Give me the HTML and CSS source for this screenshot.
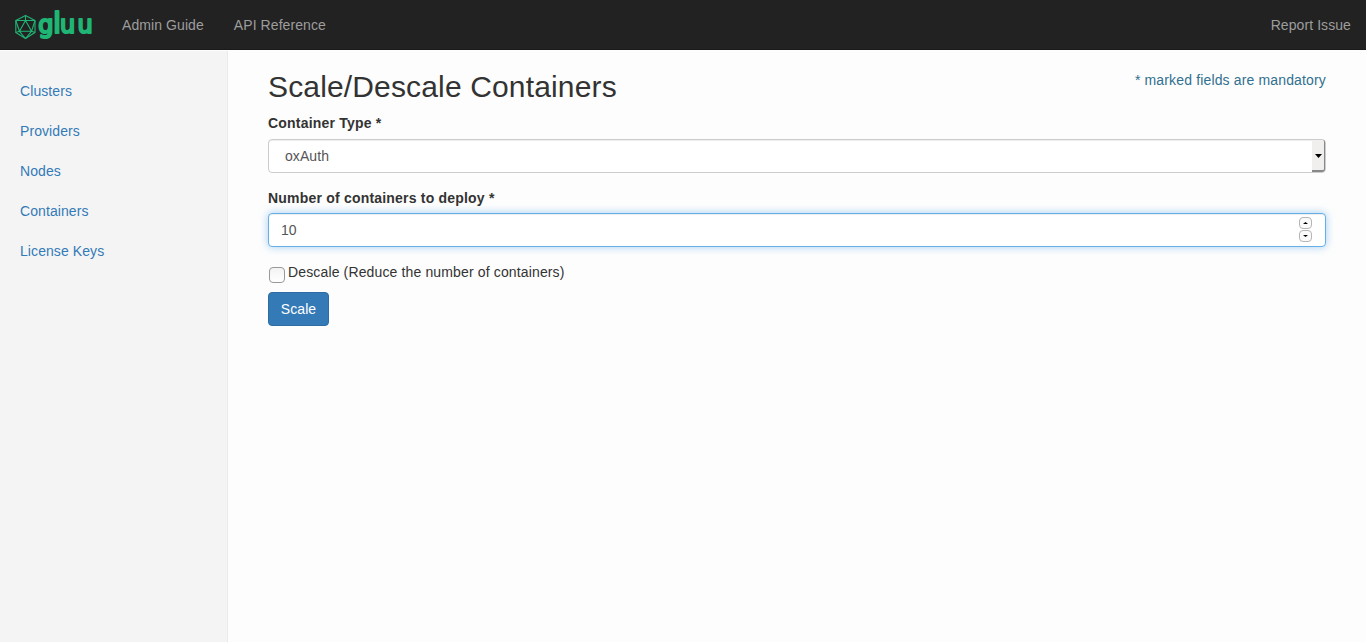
FILE: index.html
```html
<!DOCTYPE html>
<html lang="en">
<head>
<meta charset="utf-8">
<title>Gluu - Scale/Descale Containers</title>
<link rel="stylesheet" href="styles.css">
</head>
<body>
<header class="navbar">
  <a class="brand" href="#" aria-label="gluu">
    <svg width="84" height="50" viewBox="14 0 84 50">
      <g class="brand-mark">
        <path d="M25.5 15.5 35 20.5V32.5L25.5 38.5 15.8 32.5V20.5Z"/>
        <path d="M25.5 20.5 31.5 31.3H19.5ZM25.5 15.5V20.5M15.8 20.5 25.5 20.5 35 20.5M15.8 20.5 19.5 31.3M35 20.5 31.5 31.3M15.8 32.5 19.5 31.3 25.5 38.5 31.5 31.3 35 32.5"/>
      </g>
      <text class="brand-text" y="33"><tspan x="38.2">g</tspan><tspan class="brand-tall" x="53">l</tspan><tspan x="60">u</tspan><tspan x="77.4">u</tspan></text>
    </svg>
  </a>
  <nav class="nav-links">
    <a href="#">Admin Guide</a>
    <a href="#">API Reference</a>
  </nav>
  <a class="report" href="#">Report Issue</a>
</header>
<div class="layout">
  <aside class="sidebar">
    <a href="#">Clusters</a>
    <a href="#">Providers</a>
    <a href="#">Nodes</a>
    <a href="#">Containers</a>
    <a href="#">License Keys</a>
  </aside>
  <main class="content">
    <div class="heading">
      <h1>Scale/Descale Containers</h1>
      <p class="hint">* marked fields are mandatory</p>
    </div>
    <div class="label">Container Type *</div>
    <div class="control select">
      <span>oxAuth</span>
      <div class="select-button"><svg width="7" height="4" viewBox="0 0 7 4"><path d="M0 0H7L3.5 4Z"/></svg></div>
    </div>
    <div class="label label-number">Number of containers to deploy *</div>
    <div class="control number">
      <span>10</span>
      <div class="spinner">
        <div class="spin"><svg width="5" height="2" viewBox="0 0 5 2"><path d="M0 2H5L2.5 0Z"/></svg></div>
        <div class="spin"><svg width="5" height="2" viewBox="0 0 5 2"><path d="M0 0H5L2.5 2Z"/></svg></div>
      </div>
    </div>
    <div class="check-row"><span class="checkbox"></span><span class="check-text">Descale (Reduce the number of containers)</span></div>
    <button class="submit">Scale</button>
  </main>
</div>
</body>
</html>
```
FILE: styles.css
```css
* { box-sizing: border-box; }
body {
  margin: 0;
  height: 642px;
  overflow: hidden;
  font: 14px/20px "Liberation Sans", Arial, sans-serif;
  color: #333;
  background: #fdfdfd;
  letter-spacing: 0.08px;
}
a { color: #337ab7; text-decoration: none; }
.navbar {
  display: flex;
  align-items: center;
  height: 50px;
  padding: 0 15px 0 14px;
  background: #222;
  border-bottom: 1px solid #1a1a1a;
}
.brand { width: 108px; height: 50px; }
.brand svg { display: block; }
.brand-mark { fill: none; stroke: #1fb574; stroke-width: 1.1; stroke-linejoin: round; }
.brand-text {
  font: 24px "DejaVu Sans", sans-serif;
  fill: #1fb574;
  stroke: #1fb574;
  stroke-width: 2.1;
  stroke-linejoin: round;
  letter-spacing: 0;
}
.brand-tall { font-size: 29px; }
.nav-links { display: flex; gap: 30px; }
.navbar .nav-links a, .report { color: #9d9d9d; }
.report { margin-left: auto; }
.layout { display: flex; height: 592px; }
.sidebar {
  display: flex;
  flex-direction: column;
  gap: 20px;
  width: 228px;
  margin-top: 1px;
  padding: 30px 20px;
  background: #f4f4f4;
  border-right: 1px solid #eaeaea;
}
.content { flex: 1; padding: 20px 40px; }
.heading { display: flex; justify-content: space-between; height: 43px; }
h1 { margin: 0; font-size: 30px; line-height: 33px; font-weight: 400; letter-spacing: 0.15px; }
.hint { margin: 0; color: #31708f; letter-spacing: 0.15px; }
.label { height: 26px; font-weight: 700; letter-spacing: 0.2px; }
.control {
  display: flex;
  align-items: center;
  justify-content: space-between;
  height: 34px;
  padding: 0 12px;
  border: 1px solid #ccc;
  border-radius: 4px;
  color: #555;
  background: #fff;
  box-shadow: inset 0 1px 1px rgba(0, 0, 0, 0.075);
}
.select { padding: 0 0 0 16px; }
.select-button {
  display: grid;
  place-items: center;
  width: 13px;
  height: 32px;
  padding-top: 1px;
  background: #f0efee;
  border-right: 1px solid #888;
  border-bottom: 2px solid #888;
  border-radius: 0 2px 3px 0;
}
.select-button path { fill: #000; }
.label-number { height: 25px; margin-top: 15px; }
.number {
  border-color: #66afe9;
  box-shadow: inset 0 1px 1px rgba(0, 0, 0, 0.075), 0 0 8px rgba(102, 175, 233, 0.6);
}
.spinner { display: grid; gap: 1px; margin: 0 1px 1px 0; }
.spin {
  display: grid;
  place-items: center;
  width: 13px;
  height: 12px;
  border: 1px solid #b5b5b5;
  border-radius: 4px;
  background: #fafafa;
}
.spin svg { display: block; }
.check-row { display: flex; gap: 3px; height: 30px; margin-top: 15px; padding-left: 1px; }
.check-text { letter-spacing: 0.14px; }
.checkbox {
  width: 16px;
  height: 16px;
  margin-top: 5px;
  border: 1px solid #989898;
  border-radius: 4px;
  background: linear-gradient(#f3f3f3, #fff);
}
.submit {
  display: block;
  width: 61px;
  height: 34px;
  padding: 0;
  border: 1px solid #2e6da4;
  border-radius: 4px;
  background: #337ab7;
  color: #fff;
  font: inherit;
  letter-spacing: inherit;
}
```
